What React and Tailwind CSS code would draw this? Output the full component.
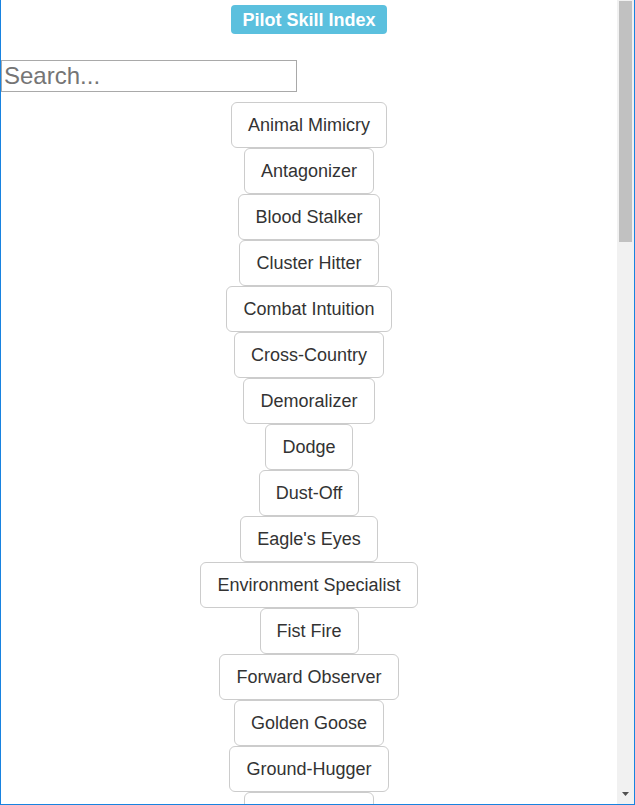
import React from "react";

const skills = [
  "Animal Mimicry",
  "Antagonizer",
  "Blood Stalker",
  "Cluster Hitter",
  "Combat Intuition",
  "Cross-Country",
  "Demoralizer",
  "Dodge",
  "Dust-Off",
  "Eagle's Eyes",
  "Environment Specialist",
  "Fist Fire",
  "Forward Observer",
  "Golden Goose",
  "Ground-Hugger",
  "Heavy Lifter",
  "Hopper",
  "Hot Dog",
];

export default function App() {
  return (
    <div
      className="w-[635px] h-[805px] flex overflow-hidden bg-white border-l border-r border-b border-[#1883e0]"
      style={{ fontFamily: '"Liberation Sans", Arial, sans-serif' }}
    >
      <div className="flex-1 flex flex-col items-center overflow-hidden">
        <span className="shrink-0 mt-[5px] h-[29px] px-[11px] flex items-center rounded-[4px] bg-[#5bc0de] text-white font-bold text-[18px] leading-none">
          Pilot Skill Index
        </span>
        <div className="shrink-0 self-stretch mt-[26px]">
          <input
            type="text"
            placeholder="Search..."
            className="block w-[296px] h-[32px] border border-[#a9a9a9] px-[2px] text-[24px] text-black placeholder:text-[#757575] outline-none"
            style={{ fontFamily: '"Liberation Sans", Arial, sans-serif' }}
          />
        </div>
        <div className="shrink-0 mt-[10px] flex flex-col items-center">
          {skills.map((s) => (
            <button
              key={s}
              className="shrink-0 h-[46px] px-[16px] border border-[#ccc] rounded-[6px] bg-white text-[#333] text-[18px] leading-[24px] whitespace-nowrap"
            >
              {s}
            </button>
          ))}
        </div>
      </div>
      <div className="shrink-0 w-[17px] flex flex-col bg-[#f1f1f1]">
        <div className="shrink-0 mt-[1px] h-[241px] mx-[2px] bg-[#c1c1c1]" />
        <div className="flex-1" />
        <div className="shrink-0 h-[17px] flex justify-center pt-[5px]">
          <svg width="7" height="4" viewBox="0 0 7 4">
            <path d="M0 0 H7 L3.5 4 Z" fill="#505050" />
          </svg>
        </div>
      </div>
    </div>
  );
}
